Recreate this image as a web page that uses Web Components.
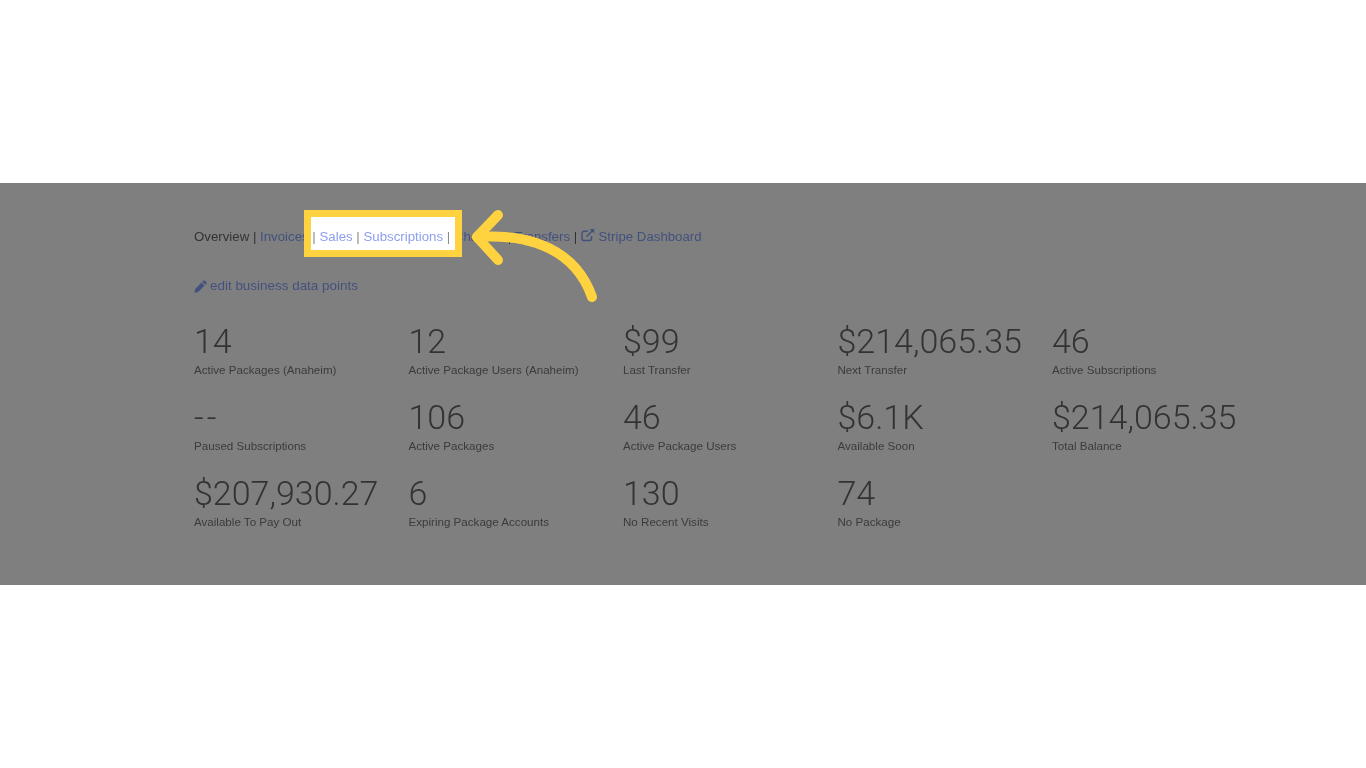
<!DOCTYPE html>
<html>
<head>
<meta charset="utf-8">
<title>Overview</title>
<style>
  html, body { margin: 0; height: 100%; background: #fff; }
  body { font-family: "Liberation Sans", Arial, sans-serif; overflow: hidden; }
</style>
</head>
<body>
<dash-band>
  <nav-links>
    <span>Overview</span> <i>|</i> <a>Invoices</a>
    <focus-box><i>|</i> <a>Sales</a> <i>|</i> <a>Subscriptions</a> <i>|</i></focus-box>
    <a>Charges</a> <i>|</i> <a>Transfers</a> <i>|</i>
    <a><link-icon></link-icon> Stripe Dashboard</a>
  </nav-links>
  <edit-link>edit business data points</edit-link>
  <stat-grid>
    <stat-item value="14" label="Active Packages (Anaheim)"></stat-item>
    <stat-item value="12" label="Active Package Users (Anaheim)"></stat-item>
    <stat-item value="$99" label="Last Transfer"></stat-item>
    <stat-item value="$214,065.35" label="Next Transfer"></stat-item>
    <stat-item value="46" label="Active Subscriptions"></stat-item>
    <stat-item value="--" label="Paused Subscriptions"></stat-item>
    <stat-item value="106" label="Active Packages"></stat-item>
    <stat-item value="46" label="Active Package Users"></stat-item>
    <stat-item value="$6.1K" label="Available Soon"></stat-item>
    <stat-item value="$214,065.35" label="Total Balance"></stat-item>
    <stat-item value="$207,930.27" label="Available To Pay Out"></stat-item>
    <stat-item value="6" label="Expiring Package Accounts"></stat-item>
    <stat-item value="130" label="No Recent Visits"></stat-item>
    <stat-item value="74" label="No Package"></stat-item>
  </stat-grid>
  <curved-arrow></curved-arrow>
</dash-band>

<script>
  class DashBand extends HTMLElement {
    constructor() {
      super();
      this.attachShadow({ mode: 'open' }).innerHTML = `
        <style>
          :host {
            display: block;
            position: relative;
            box-sizing: border-box;
            margin-top: 183px;
            height: 402px;
            padding: 44px 100px 0 194px;
            background: #7f7f7f;
          }
        </style>
        <slot></slot>
      `;
    }
  }

  class NavLinks extends HTMLElement {
    constructor() {
      super();
      this.attachShadow({ mode: 'open' }).innerHTML = `
        <style>
          :host {
            display: block;
            padding-top: 1px;
            font-size: 13.25px;
            line-height: 16px;
            color: #333;
            white-space: nowrap;
            filter: blur(.35px);
          }
        </style>
        <slot></slot>
      `;
      this.querySelectorAll(':scope > a').forEach(a => { a.style.color = '#43517f'; });
      this.querySelectorAll(':scope > i').forEach(i => { i.style.fontStyle = 'normal'; });
    }
  }

  class FocusBox extends HTMLElement {
    constructor() {
      super();
      this.attachShadow({ mode: 'open' }).innerHTML = `
        <style>
          :host {
            display: inline-block;
            position: relative;
            z-index: 2;
            margin: -12px -5px -5px -1px;
            padding: 12px 5px 5px 1px;
            background: #fff;
            box-shadow: 0 0 0 7px #ffd23f;
          }
        </style>
        <slot></slot>
      `;
      this.querySelectorAll('a').forEach(a => { a.style.color = '#8c9ff0'; });
      this.querySelectorAll('i').forEach(i => { i.style.fontStyle = 'normal'; i.style.color = '#8a8a8a'; });
    }
  }

  class LinkIcon extends HTMLElement {
    constructor() {
      super();
      this.attachShadow({ mode: 'open' }).innerHTML = `
        <style>
          :host { display: inline-block; width: 14px; height: 14px; vertical-align: -1px; margin-right: 0; }
          svg { display: block; width: 100%; height: 100%; }
        </style>
        <svg viewBox="0 0 14 14" fill="none" stroke="#43517f" stroke-width="1.5">
          <path d="M10.5 8v2.6a2 2 0 0 1-2 2H3a2 2 0 0 1-2-2V5.2a2 2 0 0 1 2-2h4"/>
          <path d="M5.5 8.6 12.4 1.7"/>
          <path d="M8.6 .9h4.6v4.6z" fill="#43517f" stroke="none"/>
        </svg>
      `;
    }
  }

  class EditLink extends HTMLElement {
    constructor() {
      super();
      this.attachShadow({ mode: 'open' }).innerHTML = `
        <style>
          :host {
            display: flex;
            align-items: center;
            gap: 4px;
            margin-top: 33px;
            font-size: 13.45px;
            line-height: 16px;
            color: #43517f;
            filter: blur(.35px);
          }
          svg { width: 13px; height: 13px; display: block; margin-right: -1px; }
        </style>
        <svg viewBox="0 0 12 12"><path fill="#43517f" d="M8.6.6a1 1 0 0 1 1.4 0l1.4 1.4a1 1 0 0 1 0 1.4l-1 1L7.6 1.6zM6.9 2.3l2.8 2.8-5.9 5.9L.4 11.7l.7-3.4z"/></svg>
        <slot></slot>
      `;
    }
  }

  class StatGrid extends HTMLElement {
    constructor() {
      super();
      this.attachShadow({ mode: 'open' }).innerHTML = `
        <style>
          :host {
            display: grid;
            grid-template-columns: repeat(5, 214.5px);
            grid-auto-rows: 76px;
            margin-top: 29px;
          }
        </style>
        <slot></slot>
      `;
    }
  }

  class StatItem extends HTMLElement {
    constructor() {
      super();
      this.attachShadow({ mode: 'open' }).innerHTML = `
        <style>
          :host {
            display: block;
            color: #333;
            filter: blur(.35px);
          }
          .value {
            font-family: Roboto, "Liberation Sans", sans-serif;
            font-weight: 300;
            font-size: 34px;
            line-height: 36px;
            white-space: nowrap;
          }
          .value.dash { letter-spacing: 3px; }
          .label {
            margin-top: 4px;
            font-size: 11.6px;
            line-height: 14px;
            color: #3b3b3b;
            white-space: nowrap;
          }
        </style>
        <div class="value"></div>
        <div class="label"></div>
      `;
      const value = this.shadowRoot.querySelector('.value');
      value.textContent = this.getAttribute('value');
      if (this.getAttribute('value') === '--') value.classList.add('dash');
      this.shadowRoot.querySelector('.label').textContent = this.getAttribute('label');
    }
  }

  class CurvedArrow extends HTMLElement {
    constructor() {
      super();
      this.attachShadow({ mode: 'open' }).innerHTML = `
        <style>
          :host { position: absolute; left: 460px; top: 20px; width: 150px; height: 110px; z-index: 3; }
          svg { display: block; width: 100%; height: 100%; }
        </style>
        <svg viewBox="0 0 150 110" fill="none" stroke="#ffd23f" stroke-width="10" stroke-linecap="round" stroke-linejoin="round">
          <path d="M38 12 17 34 38 57"/>
          <path d="M17 34C72 30 116 48 132 94"/>
        </svg>
      `;
    }
  }

  customElements.define('dash-band', DashBand);
  customElements.define('nav-links', NavLinks);
  customElements.define('focus-box', FocusBox);
  customElements.define('link-icon', LinkIcon);
  customElements.define('edit-link', EditLink);
  customElements.define('stat-grid', StatGrid);
  customElements.define('stat-item', StatItem);
  customElements.define('curved-arrow', CurvedArrow);
</script>
</body>
</html>
